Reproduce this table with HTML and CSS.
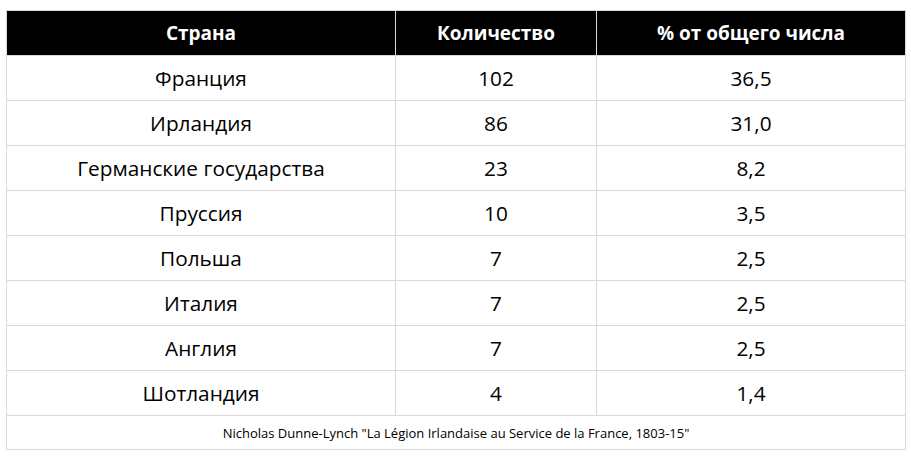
FILE: index.html
```html
<!DOCTYPE html>
<html lang="ru">
<head>
<meta charset="utf-8">
<link rel="stylesheet" href="styles.css">
</head>
<body>
<table class="data">
  <thead>
    <tr><th class="c1">Страна</th><th class="c2">Количество</th><th class="c3">% от общего числа</th></tr>
  </thead>
  <tbody>
    <tr><td>Франция</td><td>102</td><td>36,5</td></tr>
    <tr><td>Ирландия</td><td>86</td><td>31,0</td></tr>
    <tr><td>Германские государства</td><td>23</td><td>8,2</td></tr>
    <tr><td>Пруссия</td><td>10</td><td>3,5</td></tr>
    <tr><td>Польша</td><td>7</td><td>2,5</td></tr>
    <tr><td>Италия</td><td>7</td><td>2,5</td></tr>
    <tr><td>Англия</td><td>7</td><td>2,5</td></tr>
    <tr><td>Шотландия</td><td>4</td><td>1,4</td></tr>
    <tr class="src"><td colspan="3">Nicholas Dunne-Lynch "La Légion Irlandaise au Service de la France, 1803-15"</td></tr>
  </tbody>
</table>
</body>
</html>
```
FILE: styles.css
```css
html, body {
  margin: 0;
  padding: 0;
  background: #ffffff;
}
body {
  padding: 10px 0 0 6px;
  font-family: "Open Sans", "Noto Sans", sans-serif;
  color: #000;
}
.data {
  border-collapse: collapse;
  width: 900px;
  table-layout: fixed;
}
.data th, .data td {
  border: 1px solid #d9d9d9;
  text-align: center;
  padding: 0;
}
.data th {
  background: #000;
  color: #fff;
  font-weight: 700;
  font-size: 19px;
  height: 44px;
}
.data td {
  font-size: 20.8px;
  height: 44px;
}
.c1 { width: 388px; }
.c2 { width: 200px; }
.c3 { width: auto; }
.data .src td {
  font-size: 13px;
  height: 33px;
}
```
